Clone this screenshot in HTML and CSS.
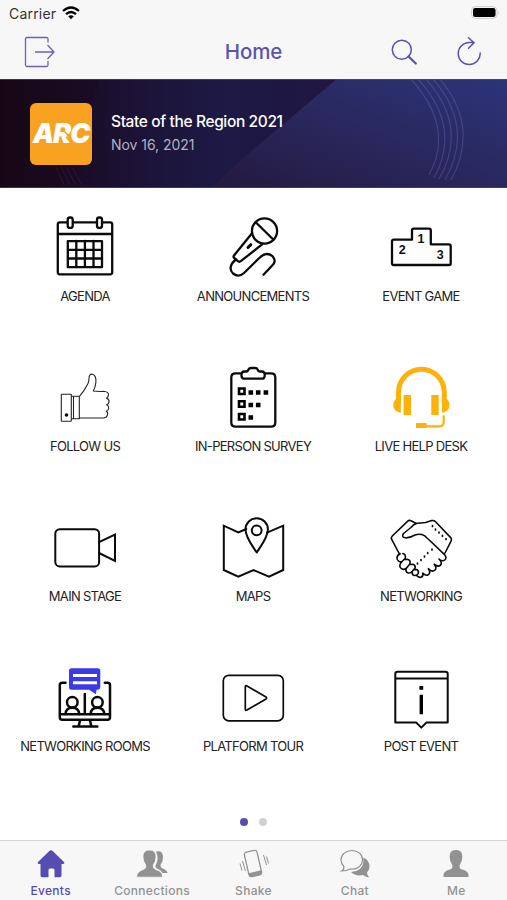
FILE: index.html
```html
<!DOCTYPE html>
<html lang="en">
<head>
<meta charset="utf-8">
<title>Home</title>
<link rel="stylesheet" href="styles.css">
</head>
<body>
<div class="app">
  <header class="top">
    <div class="status">
      <span>Carrier</span>
      <svg class="wifi" width="18" height="14" viewBox="0 0 18 14"><g fill="none" stroke="#000" stroke-width="2.3"><path d="M1 5Q9-2 17 5"/><path d="M4 8.2Q9 3.8 14 8.2"/></g><path d="M6.2 10.3Q9 8 11.800 10.300L9 13.200z"/></svg>
      <svg class="battery" width="30" height="14" viewBox="0 0 30 14"><rect x=".5" y=".5" width="25.500" height="12" rx="4" fill="#f4f3f4" stroke="#d3d2d3"/><rect x="2" y="2" width="22.500" height="9" rx="2.200"/><path d="M27.500 5q1.500 1.500 0 3.500z" fill="#bbb"/></svg>
    </div>
    <nav class="nav">
      <svg class="exit" width="32" height="32" viewBox="0 0 32 32"><g fill="none" stroke="#6962b5" stroke-width="1.300"><path d="M24 6.500V3Q24 1.500 22.500 1.500H3Q1.500 1.500 1.500 3v26q0 1.500 1.500 1.500h19.500q1.500 0 1.500-1.500v-4M11 16H30M23.500 9l6.500 7-6.500 7"/></g></svg>
      <h1>Home</h1>
      <svg class="search" width="28" height="28" viewBox="0 0 28 28"><g fill="none" stroke="#5a52ad"><circle cx="11.800" cy="11.800" r="9.500" stroke-width="1.500"/><path d="M18.500 18.500l7.300 7" stroke-width="2.300" stroke-linecap="round"/></g></svg>
      <svg class="reload" width="28" height="30" viewBox="0 0 28 30"><path d="M25.200 16A11 11 0 1 1 14.200 5.500H19M13.500 0.800L19 5.700l-5.500 5.500" fill="none" stroke="#5a52ad" stroke-width="1.500" stroke-linecap="round"/></svg>
    </nav>
  </header>

  <section class="banner">
    <svg class="art" viewBox="0 0 507 109" preserveAspectRatio="none">
      <defs>
        <linearGradient id="base"><stop offset="0" stop-color="#170716"/><stop offset=".3" stop-color="#1b0e2e"/><stop offset=".6" stop-color="#201542"/><stop offset="1" stop-color="#202058"/></linearGradient>
        <linearGradient id="glow" x1="0" x2="1" y1="1" y2="0"><stop offset="0" stop-color="#24193f"/><stop offset=".45" stop-color="#29265a"/><stop offset="1" stop-color="#2c3479"/></linearGradient>
        <linearGradient id="upper"><stop offset="0" stop-color="#1d1d4b" stop-opacity="0"/><stop offset=".6" stop-color="#1d1d4b" stop-opacity=".7"/><stop offset="1" stop-color="#1d1d4b" stop-opacity="0"/></linearGradient>
      </defs>
      <path fill="url(#base)" d="M0 0h507v109H0z"/>
      <path fill="url(#upper)" d="M100 0h237L256 68 210 109H60z"/>
      <path fill="url(#glow)" d="M337 0h170v109H210l46-41z"/>
      <g fill="none" stroke="#6265ac" stroke-opacity=".42" stroke-width="1.200"><path d="M411 0Q455 49 429 96"/><path d="M418 0Q462 48 434 99"/><path d="M426 0Q469 48 439 100"/><path d="M433 0Q475 48 445 101"/><path d="M440 0Q480 48 451 101"/></g>
      <g fill="none" stroke="#715080" stroke-opacity=".2"><path d="M56 88l8 18M61 88l9 18M66 88l10 18M72 88l10 18"/></g>
      <path fill="#555172" opacity=".6" d="M0 0h507v1H0zM0 108h507v1H0z"/>
    </svg>
    <div class="logo"><span class="mark">ARC</span><svg class="slash" width="14" height="16" viewBox="0 0 14 16"><path d="M1 1l6 6M4 8l7 7" stroke="#f9a221" stroke-width="1.500"/></svg></div>
    <div class="event"><strong>State of the Region 2021</strong><span>Nov 16, 2021</span></div>
  </section>

  <main class="grid">
    <a class="cell"><svg viewBox="0 0 64 64"><g class="ln"><rect x="4.800" y="7.300" width="54.400" height="52" rx="2"/><path d="M5 19h54"/><rect x="14.800" y="26.200" width="34.200" height="26"/><path d="M23.300 26v26M31.900 26v26M40.500 26v26M15 34.900h34M15 43.500h34"/><rect x="14.700" y="2.500" width="5" height="10.400" rx="2.200" fill="#fff"/><rect x="44" y="2.500" width="5" height="10.400" rx="2.200" fill="#fff"/></g></svg><span>AGENDA</span></a>
    <a class="cell"><svg viewBox="0 0 64 64"><g class="ln"><circle cx="43.500" cy="16" r="12.600"/><path d="M34.700 7.300l17.800 17.500M30.800 18.500L13 40.500q-1 1.500.3 2.500l4 3.300q1.200.9 2.500-.1L41.200 29.300M15 44.500C9 49 8 54.500 12 58.500q5.500 4.500 11-.5L38 43.300Q45 36 51.500 41.200q4.500 5-.3 9.300L42.500 59.700"/><path stroke-width="3" d="M27 32.500l2.800-2.800"/></g></svg><span>ANNOUNCEMENTS</span></a>
    <a class="cell"><svg viewBox="0 0 64 64"><path class="ln" d="M3 49V26.500Q3 24.700 4.800 24.700H23V15.500q0-1.800 1.800-1.800H40q1.800 0 1.800 1.800v13.800h18q1.900 0 1.900 1.900V48.500q0 1.500-1.500 1.500H4.500Q3 50 3 48.500z"/><g class="num"><text x="13.300" y="39">2</text><text x="32" y="28.300">1</text><text x="51.300" y="44">3</text></g></svg><span>EVENT GAME</span></a>

    <a class="cell"><svg viewBox="0 0 64 64"><g class="thin"><rect x="8.300" y="29.300" width="10" height="27" rx=".5"/><path d="M18.300 31.300h8v22.400h-8M20.500 31.500v22M26.300 31.700Q31 26.500 35 18.500q1-2 1-5 .2-5 3.500-4.300 4 1.200 3.400 8Q42.500 22 40.300 26q6 .8 10 .3 5.200.3 5.200 3.500 0 2-2 3.300 3 1.300 2.500 4-.3 2-2.500 2.700 2.500 1.200 2.300 3.500-.3 2.200-2.600 2.900 2 1.200 1.300 3.700-.7 2.700-3.500 3.100H26.300"/></g><circle cx="13.500" cy="50" r="1.800"/></svg><span>FOLLOW US</span></a>
    <a class="cell"><svg viewBox="0 0 64 64"><g class="ln"><path d="M20 8.300h-5.500Q10.300 8.300 10.300 12.500v45q0 4.200 4.200 4.200h35.600q4.200 0 4.200-4.200v-45q0-4.200-4.200-4.200H44"/><path d="M20.500 9.500q0-2.800 3-3h2q1.500 0 2.200-2.300Q28.200 3 30 3h4.200q1.800 0 2.300 1.300.7 2.200 2.200 2.200h2q3 .2 3 3v1.200q0 3-3 3H23.500q-3 0-3-3z"/></g><g fill="none" stroke="#000" stroke-width="2.600"><path d="M18 23.500h5.500V29H18zM18 36.300h5.500v5.500H18zM18 49h5.500v5.500H18z"/></g><path d="M27.500 25.200h4.600v4.600h-4.600zM34.900 25.200h4.600v4.600h-4.600zM42.600 25.200h4.600v4.600h-4.600zM27.500 37.700h4.600v4.600h-4.600zM34.900 37.700h4.600v4.600h-4.600zM27.500 50.200h4.600v4.600h-4.600z"/></svg><span>IN-PERSON SURVEY</span></a>
    <a class="cell"><svg viewBox="0 0 64 64"><g fill="none" stroke="#fdb10b"><path stroke-width="5" d="M9.500 38V27.500a22.900 23.300 0 0 1 45.800 0V38"/><path stroke-width="2.200" d="M54.700 50.300V57q0 4.300-4.200 4.300H36"/></g><path fill="#fdb10b" d="M7 34h4.800v13.800Q4.300 46.500 4.300 40.500 4.300 36 7 34zM14.600 30H22v20h-7.400zM42.300 30h7.400v20h-7.400zM53 34h4.800q2.700 2 2.700 6.500 0 6-7.500 7.300zM27 58h10.700v5H27z"/></svg><span>LIVE HELP DESK</span></a>

    <a class="cell"><svg viewBox="0 0 64 64"><g class="ln mid"><rect x="2.300" y="14.200" width="43.800" height="37.200" rx="4.500"/><path stroke-linejoin="miter" d="M46 27.200l16-7.700v26.300L46 38"/></g></svg><span>MAIN STAGE</span></a>
    <a class="cell"><svg viewBox="0 0 64 64"><g class="ln mid"><path stroke-linejoin="miter" d="M25.300 14l-8 3.500L2.800 10.700V55l14.500 6.700L32.500 55 48 61.700 62.200 55V10.700L46 17.600"/><path d="M35.700 37.500C31.500 31 24.500 22.500 24.500 14.500a11.200 11.200 0 0 1 22.400 0c0 8-7 16.500-11.200 23z"/><circle cx="35.700" cy="15.300" r="4.900"/></g></svg><span>MAPS</span></a>
    <a class="cell"><svg viewBox="0 0 64 64"><g class="ln shake"><path d="M27.500 8.500L22 5.700q-2-.8-3.500.6L3.300 21q-1.600 1.600-.6 3.400L10.700 39.500M56 38l6.200-12.200q.8-1.800-.5-3.200L46.300 6.500q-1.500-1.400-3.500-.9L36.500 7.500q-5 .4-8.500.8-3.500.9-6 4.200l-7.500 6q-2.500 3.800 2 4.300 4 .3 9.500-2.800 5-1.800 9.300.6 2 1.400 20.500 19.300 2.500 3-.2 5.200-2.600 1.700-5.600-1.100 3.600 3.600 1.500 6.200-2.500 2.300-6.300-1 3 3.800.7 6-3 2.300-6.500-1.500 2.700 4-.1 6-3 1.600-5.600-1.600 1 3.300-1.600 4.200-2.800.5-4.800-2"/><path d="M11 38.500q-4 2.600-2.700 6 1.500 3 4.500 2.200l3.500-3.500q.8-3.700-2.400-4.700M13 46.500q-3.600 4-1.300 6.500 2.700 2.500 5.700.2l3.600-4.500q.8-3.700-2.500-4.500l-3 .3M17.500 53q-1.500 3.500 1 4.700 2.700 1 4.600-1.200l3-3.500q.7-3-2.200-3.800l-2.700.3M23.300 57q-.5 3 2 3.500 2.500.4 4-2.200.7-3-1.700-3.800l-2 .2"/></g><path class="dots" d="M43.500 10.500v1M46.500 14v1M50 17v1M53.500 20.300v1M57 23.500v1M43 34v1M38.700 37.500v1M35.500 41v1M32 44.500v1M28.500 48v1"/></svg><span>NETWORKING</span></a>

    <a class="cell"><svg viewBox="0 0 64 64"><g class="ln heavy"><path d="M12.500 17.700H9.300Q6.800 17.700 6.800 20v32.300q0 2.500 2.500 2.500h45.200q2.500 0 2.500-2.500V20q0-2.300-2.500-2.300h-2.700M7 49.300h50M31.800 29v20M27 55.500l-1.300 5.500M37 55.500l1.300 5.500M20.300 61.500h24"/><circle cx="19.300" cy="37.300" r="5.300"/><circle cx="44.400" cy="37.300" r="5.300"/><path d="M12.500 49q.5-6.200 6.800-6.200T26.200 49M37.600 49q.5-6.200 6.800-6.200T51.300 49"/></g><path fill="#3a3ae6" d="M18.500 3.300h26.300q2.500 0 2.500 2.500v16.500q0 2.400-2.300 2.400H43.500l-.5 4.500-7-4.500H18.500q-2.500 0-2.500-2.500V5.800q0-2.500 2.500-2.500z"/><path stroke="#fff" stroke-width="3" d="M20 10.500h24M20 17.800h24"/></svg><span>NETWORKING ROOMS</span></a>
    <a class="cell"><svg viewBox="0 0 64 64"><g class="ln tour"><rect x="2.300" y="10.300" width="60" height="45.500" rx="5.500"/><path d="M24.300 22v22q0 2 1.700 1L45 34q1.200-1 0-2L26 21q-1.700-1-1.700 1z"/></g></svg><span>PLATFORM TOUR</span></a>
    <a class="cell"><svg viewBox="0 0 64 64"><path class="ln mid" d="M6.300 57.600V9q0-2.300 2.300-2.300h47.800q2.300 0 2.300 2.300v48.600H37.300l-5 5-5-5zM6.500 13.500h52"/><path d="M30.400 21h3.800v3.800h-3.800zM30.600 29.700h3.400v19.500h-3.400z"/></svg><span>POST EVENT</span></a>
  </main>

  <div class="pager"><i class="on"></i><i></i></div>

  <footer class="tabs">
    <a class="tab active"><svg viewBox="0 0 32 30"><path d="M16 1.200q1 0 1.700.7L29 13q1 1.800-1 2h-1.500v11.500q0 1.700-1.700 1.700H19.500V21q0-1.500-1.500-1.500h-3q-1.500 0-1.500 1.500v7.200H7.200q-1.700 0-1.700-1.700V15H4q-2-.2-1-2L14.300 1.900q.7-.7 1.700-.7z"/></svg><span>Events</span></a>
    <a class="tab"><svg viewBox="0 0 32 30"><path d="M20 2.500q6.500-1.700 7 5 .3 4.500-2.500 8.500-.3 2.500 2 3.500 4.500 1.500 5 4.500h-5q-1-2.500-4.500-4-3-1.300-2.500-3.500 4-6.500.5-14z"/><path stroke="#f8f7f8" stroke-width=".8" d="M13.500 1c5 0 6.700 3.200 6.500 7.500q0 4-2.700 7.500-.5 3 1.500 4 6 1.700 7 4.500.8 1.500.7 3.700h-26Q.5 24.500 3 22.700q2-1.400 5-2.400 2.500-1.300 1.700-4.300Q7 12.500 7 8.500C6.800 4.200 8.500 1 13.500 1z"/></svg><span>Connections</span></a>
    <a class="tab"><svg viewBox="0 0 32 30"><g fill="none" stroke="#929292"><rect x="9.500" y="2" width="13" height="25" rx="2.500" transform="rotate(-13 16 14.500)" stroke-width="1.300"/><path d="M5.500 12l3 10M3 14.500l2 7M26.500 6l3 10M29.500 7.500l2 7"/></g><path d="M11.500 24.200l12.400-2.900.5 2.300q.3 2-1.600 2.500l-8 1.800q-2 .5-2.600-1.400z"/></svg><span>Shake</span></a>
    <a class="tab"><svg viewBox="0 0 32 30"><path d="M24.300 8.500q6.700 3 6.200 9.500-.3 3.300-2.500 5.500 0 3 2.200 4.800-3.200.2-6.200-2.300-7 1.800-12-3 11.500-1 12.300-9.500z"/><path fill="#f8f7f8" stroke="#929292" stroke-width="1.200" d="M13 1.500c6 0 10.500 4 10.500 9.300 0 6-5.500 10-12.500 9.200Q8 22 2.700 22q2.500-1.500 2.200-4.500Q2 14.500 2 10.800C2 5.500 7 1.500 13 1.500z"/></svg><span>Chat</span></a>
    <a class="tab"><svg viewBox="0 0 32 30"><path d="M16 1c5 0 6.500 3.200 6.300 7.300q0 4.200-2.600 7.700-.8 3 1.500 4.200 6 1.600 7 4.300.4 1.500.3 3.500h-25q-.2-2.200.3-3.500 1-2.700 7-4.300 2.300-1.200 1.500-4.200-2.600-3.500-2.600-7.700C9.500 4.200 11 1 16 1z"/></svg><span>Me</span></a>
  </footer>
</div>
</body>
</html>
```
FILE: styles.css
```css
* { box-sizing: border-box; }
body { margin: 0; background: #fff; font-family: Inter, "Liberation Sans", sans-serif; }
svg { display: block; flex: none; }
.app { width: 507px; height: 900px; display: flex; flex-direction: column; overflow: hidden; }
.top { height: 79px; background: #f8f7f8; flex: none; }
.status { height: 26px; display: flex; align-items: center; padding: 0 6px 0 9px; font-size: 14px; letter-spacing: .2px; color: #333; }
.wifi { margin-left: 6px; }
.battery { margin-left: auto; }
.nav { height: 52px; display: grid; grid-template-columns: 32px 1fr 28px 28px; column-gap: 37px; align-items: center; padding: 0 24px; }
.nav h1 { margin: 0; font-size: 20.500px; line-height: 24px; font-weight: 500; color: #5b53ae; text-align: center; padding-left: 61px; letter-spacing: -.1px; }
.banner { height: 109px; flex: none; display: grid; align-items: center; grid-template-columns: 62px 1fr; column-gap: 19px; padding-left: 30px; position: relative; }
.art { position: absolute; inset: 0; width: 507px; height: 109px; }
.logo { position: relative; width: 62px; height: 62px; border-radius: 6px; background: #f9a221; display: flex; align-items: center; justify-content: center; }
.mark { font-size: 27px; line-height: 36px; font-style: italic; font-weight: 900; color: #fff; letter-spacing: -1px; }
.slash { position: absolute; left: 32px; top: 26px; }
.event { position: relative; display: flex; flex-direction: column; gap: 4px; margin-top: -2px; }
.event strong { font-size: 15.500px; line-height: 19px; font-weight: 500; color: #fff; letter-spacing: -.37px; }
.event span { font-size: 14px; line-height: 19px; color: #b5b0c2; letter-spacing: -.05px; }
.grid { display: grid; grid-template-columns: repeat(3, 168px); grid-auto-rows: 150px; padding: 27px 0 0 1px; height: 628px; flex: none; }
.cell { display: flex; flex-direction: column; align-items: center; color: #222; }
.cell svg { width: 64px; height: 64px; }
.cell span { margin-top: 9px; font-size: 13px; line-height: 16px; letter-spacing: -.7px; white-space: nowrap; }
.ln { fill: none; stroke: #0b0b0b; stroke-width: 2.300; stroke-linejoin: round; stroke-linecap: round; }
.mid { stroke-width: 2; }
.tour { stroke-width: 1.700; }
.shake { stroke-width: 1.600; }
.heavy { stroke-width: 2.500; }
.thin { fill: none; stroke: #222; stroke-width: 1.100; stroke-linejoin: round; }
.dots { fill: none; stroke: #111; stroke-width: 1.700; stroke-linecap: round; }
.num { font: 700 12.500px "Liberation Sans", sans-serif; text-anchor: middle; fill: #111; }
.pager { height: 24px; flex: none; display: flex; justify-content: center; gap: 11px; padding-top: 2px; }
.pager i { width: 8px; height: 8px; border-radius: 50%; background: #d0d0d0; }
.pager .on { background: #564db0; }
.tabs { height: 60px; flex: none; display: grid; grid-template-columns: repeat(5, 1fr); border-top: 1px solid #d5d4d5; background: #f8f7f8; }
.tab { display: flex; flex-direction: column; align-items: center; padding-top: 8px; color: #929292; }
.tab svg { width: 32px; height: 30px; fill: currentColor; }
.tab span { margin-top: 4px; font-size: 12px; line-height: 16px; letter-spacing: .3px; font-weight: 500; }
.active { color: #564db0; }
```
